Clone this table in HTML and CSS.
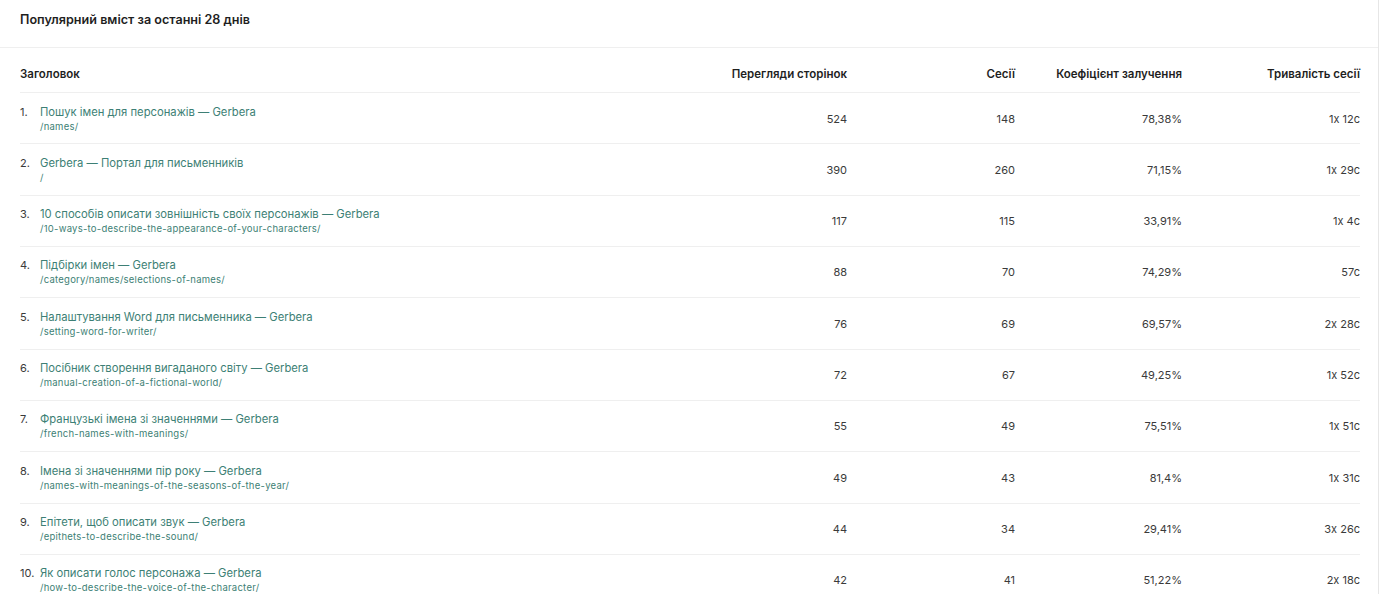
FILE: index.html
```html
<!DOCTYPE html>
<html lang="uk">
<head>
<meta charset="utf-8">
<title>Популярний вміст</title>
<link rel="stylesheet" href="styles.css">
</head>
<body>
<section class="card">
  <header class="card-head">
    <h2 class="card-title">Популярний вміст за останні 28 днів</h2>
  </header>
  <div class="table">
    <div class="row head">
      <div class="c-title">Заголовок</div>
      <div class="num">Перегляди сторінок</div>
      <div class="num">Сесії</div>
      <div class="num">Коефіцієнт залучення</div>
      <div class="num">Тривалість сесії</div>
    </div>
    <div class="row">
      <div class="c-title"><span class="idx">1.</span><div class="page"><a class="name">Пошук імен для персонажів — Gerbera</a><span class="path">/names/</span></div></div>
      <div class="num">524</div><div class="num">148</div><div class="num">78,38%</div><div class="num">1х 12с</div>
    </div>
    <div class="row">
      <div class="c-title"><span class="idx">2.</span><div class="page"><a class="name">Gerbera — Портал для письменників</a><span class="path">/</span></div></div>
      <div class="num">390</div><div class="num">260</div><div class="num">71,15%</div><div class="num">1х 29с</div>
    </div>
    <div class="row">
      <div class="c-title"><span class="idx">3.</span><div class="page"><a class="name">10 способів описати зовнішність своїх персонажів — Gerbera</a><span class="path">/10-ways-to-describe-the-appearance-of-your-characters/</span></div></div>
      <div class="num">117</div><div class="num">115</div><div class="num">33,91%</div><div class="num">1х 4с</div>
    </div>
    <div class="row">
      <div class="c-title"><span class="idx">4.</span><div class="page"><a class="name">Підбірки імен — Gerbera</a><span class="path">/category/names/selections-of-names/</span></div></div>
      <div class="num">88</div><div class="num">70</div><div class="num">74,29%</div><div class="num">57с</div>
    </div>
    <div class="row">
      <div class="c-title"><span class="idx">5.</span><div class="page"><a class="name">Налаштування Word для письменника — Gerbera</a><span class="path">/setting-word-for-writer/</span></div></div>
      <div class="num">76</div><div class="num">69</div><div class="num">69,57%</div><div class="num">2х 28с</div>
    </div>
    <div class="row">
      <div class="c-title"><span class="idx">6.</span><div class="page"><a class="name">Посібник створення вигаданого світу — Gerbera</a><span class="path">/manual-creation-of-a-fictional-world/</span></div></div>
      <div class="num">72</div><div class="num">67</div><div class="num">49,25%</div><div class="num">1х 52с</div>
    </div>
    <div class="row">
      <div class="c-title"><span class="idx">7.</span><div class="page"><a class="name">Французькі імена зі значеннями — Gerbera</a><span class="path">/french-names-with-meanings/</span></div></div>
      <div class="num">55</div><div class="num">49</div><div class="num">75,51%</div><div class="num">1х 51с</div>
    </div>
    <div class="row">
      <div class="c-title"><span class="idx">8.</span><div class="page"><a class="name">Імена зі значеннями пір року — Gerbera</a><span class="path">/names-with-meanings-of-the-seasons-of-the-year/</span></div></div>
      <div class="num">49</div><div class="num">43</div><div class="num">81,4%</div><div class="num">1х 31с</div>
    </div>
    <div class="row">
      <div class="c-title"><span class="idx">9.</span><div class="page"><a class="name">Епітети, щоб описати звук — Gerbera</a><span class="path">/epithets-to-describe-the-sound/</span></div></div>
      <div class="num">44</div><div class="num">34</div><div class="num">29,41%</div><div class="num">3х 26с</div>
    </div>
    <div class="row">
      <div class="c-title"><span class="idx">10.</span><div class="page"><a class="name">Як описати голос персонажа — Gerbera</a><span class="path">/how-to-describe-the-voice-of-the-character/</span></div></div>
      <div class="num">42</div><div class="num">41</div><div class="num">51,22%</div><div class="num">2х 18с</div>
    </div>
  </div>
</section>
</body>
</html>
```
FILE: styles.css
```css
html, body {
  margin: 0;
  padding: 0;
  background: #fff;
}
body {
  font-family: Inter, "Noto Sans", "Liberation Sans", sans-serif;
  color: #2b2b2b;
  overflow: hidden;
}
.card {
  width: 1378px;
  border-right: 1px solid #e6e6e6;
  min-height: 594px;
}
.card-head {
  height: 47px;
  border-bottom: 1px solid #efefef;
  padding: 0 20px;
  display: flex;
  align-items: flex-start;
}
.card-title {
  margin: 11px 0 0;
  font-size: 12.6px;
  line-height: 17px;
  font-weight: 600;
  color: #1f1f1f;
}
.table {
  margin: 0 18px 0 20px;
}
.row {
  display: grid;
  grid-template-columns: 667px 160px 168px 167px 178px;
  border-bottom: 1px solid #efefef;
  padding: 10.5px 0 9.83px;
  align-items: center;
  font-size: 11px;
  line-height: 16px;
}
.row.head {
  padding: 18px 0 10px;
  font-weight: 600;
  font-size: 11.5px;
  color: #1f1f1f;
}
.num {
  text-align: right;
  color: #3a3a3a;
}
.head .num { color: #1f1f1f; }
.c-title {
  display: flex;
  align-items: flex-start;
}
.idx {
  width: 20px;
  flex: none;
  color: #3a3a3a;
  font-size: 11px;
}
.page {
  display: flex;
  flex-direction: column;
}
.name {
  color: #3d7f75;
  font-size: 11.25px;
  line-height: 16px;
}
.path {
  color: #3d7f75;
  font-size: 9.5px;
  letter-spacing: 0.25px;
  line-height: 14px;
}
```
